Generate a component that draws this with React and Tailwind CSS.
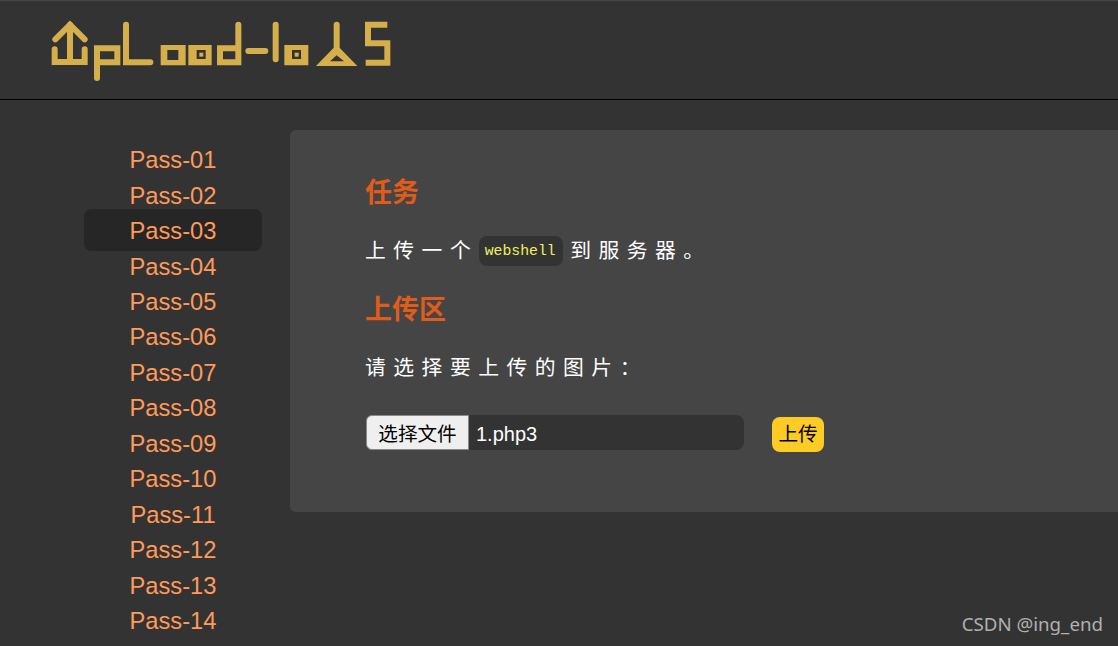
const passes = ["01","02","03","04","05","06","07","08","09","10","11","12","13","14"];
const cjk = "font-['Liberation_Sans','Noto_Sans_CJK_SC',sans-serif]";

function Logo() {
  return (
    <svg viewBox="0 0 1080 240" className="block w-[360px] h-[80px]" fill="none" stroke="#d4af4c" strokeWidth="18" strokeLinejoin="miter" strokeLinecap="round">
      <path d="M46 88 L90 44 L134 88" />
      <path d="M90 44 V155" />
      <path d="M44 118 V156 H134 V118" />
      <path d="M171 204 V115 H232 V157 H171" />
      <path d="M258 44 V157 H331" />
      <g fill="#d4af4c" stroke="none" fillRule="evenodd">
        <path d="M362 105 H437 V166 H362 Z M382 120 V150 H415 V120 Z" />
        <path d="M445 105 H515 V166 H445 Z M470 120 V147 H497 V120 Z" />
        <rect x="478" y="128" width="12" height="12" />
        <path d="M733 105 H805 V166 H733 Z M756 120 V147 H783 V120 Z" />
        <rect x="764" y="128" width="12" height="12" />
        <path d="M890 104 L952 168 H828 Z M890 136 L870 154 H912 Z" />
      </g>
      <path d="M595 44 V157 H540 V115 H595" />
      <path d="M625 123 H676" />
      <path d="M707 44 V148" />
      <path d="M890 44 V115" />
      <path d="M1042 44 H984 V100 H1042 V158 H977" strokeLinecap="butt" />
    </svg>
  );
}

export default function App() {
  return (
    <div className={`relative h-[646px] w-[1118px] overflow-hidden bg-[#333333] ${cjk}`}>
      <header className="h-[100px] border-t border-b border-t-[#444444] border-b-black pl-[40px] pt-[9px]">
        <Logo />
      </header>
      <div className="flex pt-[30px]">
        <nav className="w-[290px] shrink-0 pl-[84px] pt-[12.2px]">
          {passes.map((p) => (
            <div key={p} className="flex h-[35.46px] w-[178px] items-center justify-center">
              <a className={`flex w-full items-center justify-center rounded-lg text-[23.7px] text-[#ff9a5a] ${p === "03" ? "mb-[2px] h-[42px] shrink-0 bg-[#262626] pt-[4px]" : "pt-[2px]"}`}>
                Pass-{p}
              </a>
            </div>
          ))}
        </nav>
        <main className="h-[382px] flex-1 rounded-l-md bg-[#454545] pl-[76px] pt-[46px]">
          <h2 className="-ml-[1px] h-[34px] text-[27px] leading-[34px] font-bold text-[#e05c1a]">任务</h2>
          <p className="-ml-[1px] mt-[26px] flex h-[30px] items-center text-[20.8px] tracking-[7.5px] text-white">
            <span>上传一个</span>
            <code className="ml-[1px] mr-[7px] flex h-[30px] w-[84px] items-center justify-center rounded-lg bg-[#333333] pr-[2px] font-['Liberation_Mono',monospace] text-[14.8px] font-normal tracking-normal text-[#f0f060]">webshell</code>
            <span>到服务器。</span>
          </p>
          <h2 className="-ml-[1px] mt-[27px] h-[34px] text-[27px] leading-[34px] font-bold text-[#e05c1a]">上传区</h2>
          <p className="-ml-[1px] mt-[26px] h-[30px] text-[20.8px] leading-[30px] tracking-[7.5px] text-white">请选择要上传的图片：</p>
          <form className="mt-[32px] flex items-start">
            <div className="flex h-[35px] w-[378px] items-center rounded-lg bg-[#333333] text-[20px] text-white">
              <button type="button" className="h-[35px] w-[103px] shrink-0 rounded-l-md border border-[#8a8a8a] bg-[#efefef] pt-[4px] text-[19.6px] text-black">选择文件</button>
              <span className="ml-[7px] pt-[2px]">1.php3</span>
            </div>
            <button type="button" className="ml-[28px] mt-[2px] h-[35px] w-[52px] rounded-lg bg-[#fccb26] text-[19.6px] text-black">上传</button>
          </form>
        </main>
      </div>
      <div className="absolute right-[15px] bottom-[9px] font-['Noto_Sans',sans-serif] text-[18.7px] leading-[26px] text-[#b0b0b0]">CSDN @ing_end</div>
    </div>
  );
}
